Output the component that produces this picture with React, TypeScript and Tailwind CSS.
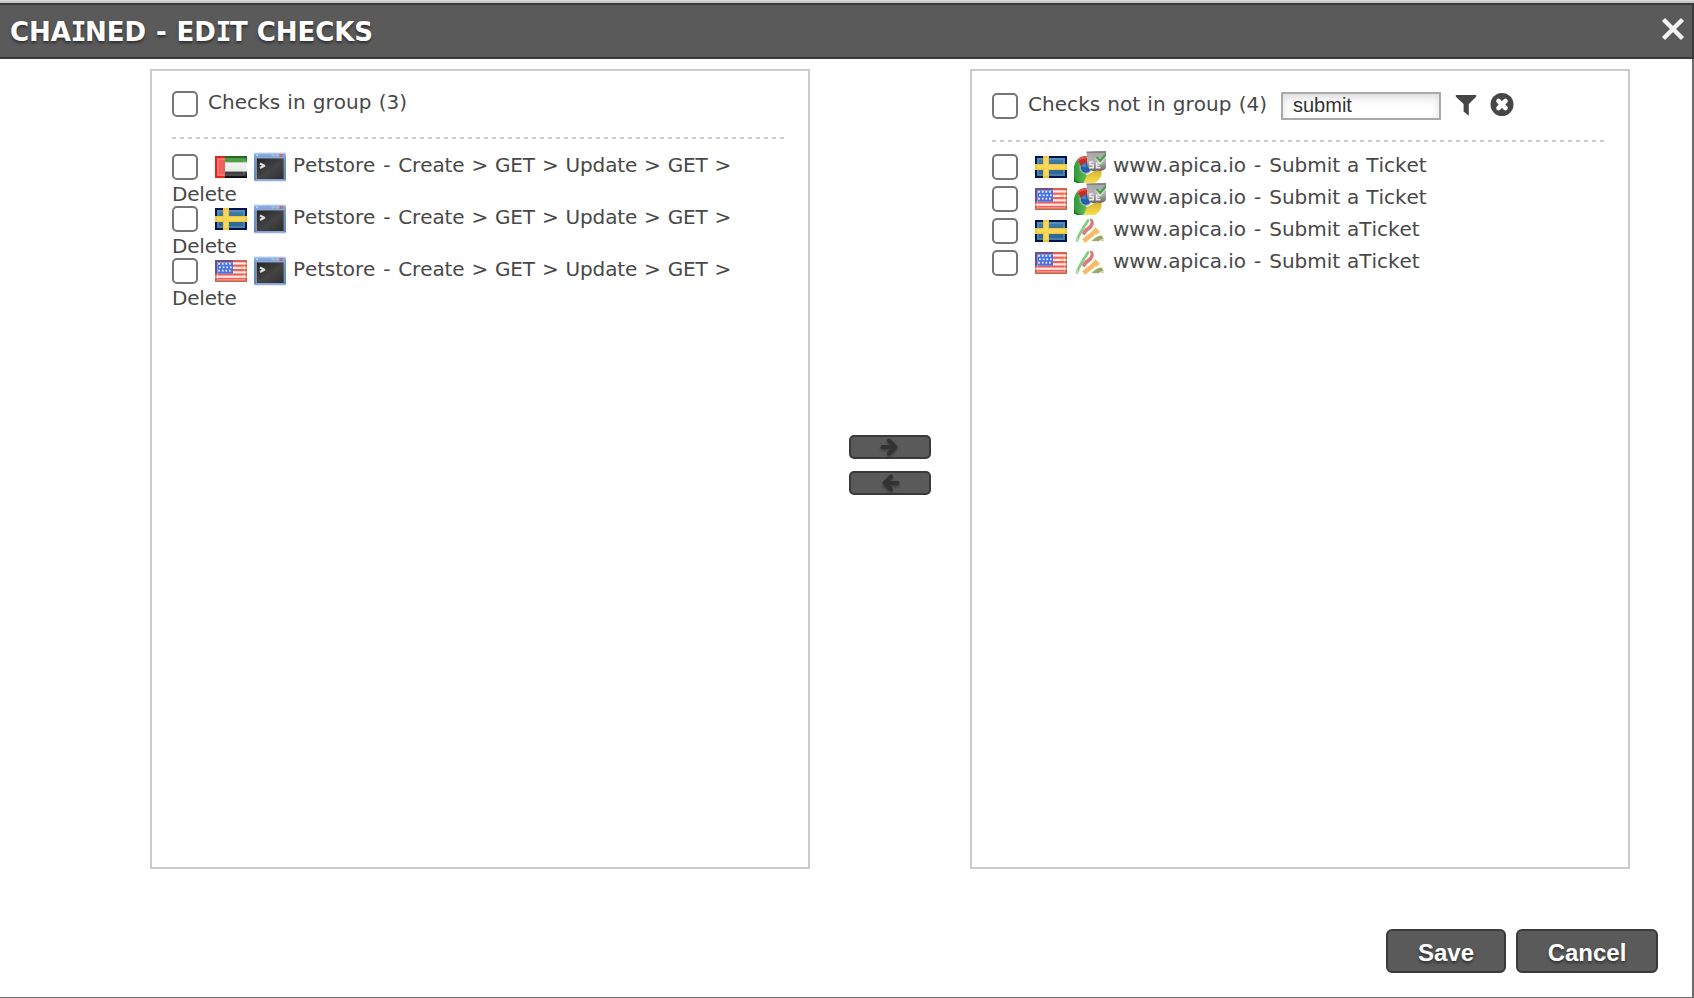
import React from "react";

const text =
  "font-['DejaVu_Sans',Verdana,sans-serif] text-[20px] text-[#484848] [font-kerning:none] [word-spacing:0.7px] whitespace-pre";

function Box() {
  return (
    <input
      type="checkbox"
      className="block h-[26px] w-[26px] shrink-0 appearance-none rounded-[5px] border-2 border-[#767676] bg-white"
    />
  );
}

function FlagFrame({ children }: { children: React.ReactNode }) {
  return (
    <svg width="32" height="22" viewBox="0 0 32 22" className="block shrink-0">
      {children}
    </svg>
  );
}

function FlagAE() {
  return (
    <FlagFrame>
      <defs>
        <linearGradient id="aeg" x1="0" y1="0" x2="0" y2="1">
          <stop offset="0" stopColor="#14600f" />
          <stop offset="1" stopColor="#62b257" />
        </linearGradient>
        <linearGradient id="aew" x1="0" y1="0" x2="0" y2="1">
          <stop offset="0" stopColor="#ffffff" />
          <stop offset="1" stopColor="#dedede" />
        </linearGradient>
        <linearGradient id="aek" x1="0" y1="0" x2="0" y2="1">
          <stop offset="0" stopColor="#4a4a4a" />
          <stop offset=".6" stopColor="#2a2a2a" />
          <stop offset="1" stopColor="#000000" />
        </linearGradient>
      </defs>
      <rect width="32" height="22" fill="url(#aew)" />
      <rect x="10" width="22" height="6.5" fill="url(#aeg)" />
      <rect x="10" y="15.5" width="22" height="6.5" fill="url(#aek)" />
      <rect width="10" height="22" fill="#e8211c" />
      <rect x="2" y="2" width="8" height="18" fill="#f2605a" />
      <rect x="3" y="3" width="26" height="16" fill="none" stroke="#fff" strokeWidth="2" strokeOpacity=".14" />
    </FlagFrame>
  );
}

function FlagSE() {
  return (
    <FlagFrame>
      <defs>
        <linearGradient id="seb" x1="0" y1="0" x2="0" y2="1">
          <stop offset="0" stopColor="#427fa9" />
          <stop offset="1" stopColor="#286291" />
        </linearGradient>
      </defs>
      <rect width="32" height="22" fill="#02134d" />
      <g className="[filter:blur(0.4px)]">
        <rect x="2" y="2" width="28" height="18" fill="url(#seb)" />
        <rect x="3" y="3" width="26" height="16" fill="none" stroke="#78a9c6" strokeWidth="2" strokeOpacity=".4" />
        <rect x="8" width="6" height="22" fill="#f4c437" />
        <rect y="8" width="32" height="6" fill="#f4c437" />
        <rect x="9" y="2" width="4" height="18" fill="#f9d65c" />
        <rect x="2" y="9" width="28" height="4" fill="#f9d65c" />
      </g>
    </FlagFrame>
  );
}

function FlagUS() {
  return (
    <FlagFrame>
      <rect width="32" height="22" fill="#fbece8" />
      <g className="[filter:blur(0.4px)]">
        {[0, 4.4, 8.8, 13.2, 17.6].map((y) => (
          <rect key={y} y={y + 0.2} width="32" height="2.2" fill="#f26158" />
        ))}
        <rect y="20.2" width="32" height="1.8" fill="#d97c60" />
        <rect width="18" height="13.6" fill="#4a6fe0" />
        <path d="M0 0H18V2H2V13.6H0Z" fill="#5551b0" />
        {[3.8, 7.2, 10.6].map((y, r) =>
          [4, 7.6, 11.2, 14.8].map((x) => (
            <rect key={`${x}-${y}`} x={x + (r % 2 ? 0.9 : 0) - 0.8} y={y - 0.8} width="1.8" height="1.8" fill="#e2ecff" />
          ))
        )}
        <rect x="2.5" y="2.5" width="27" height="17" fill="none" stroke="#fff" strokeOpacity=".3" />
        <rect x="26.3" y="6.6" width="2" height="2.2" fill="#ffc23e" />
      </g>
      <rect x=".75" y=".75" width="30.5" height="20.5" fill="none" stroke="#b4472c" strokeWidth="1.5" strokeOpacity=".45" />
    </FlagFrame>
  );
}

function TerminalIcon() {
  return (
    <svg width="32" height="32" viewBox="0 0 32 32" className="block shrink-0">
      <defs>
        <linearGradient id="tmf" x1="0" y1="0" x2="0" y2="1">
          <stop offset="0" stopColor="#8fb2e4" />
          <stop offset=".2" stopColor="#7197d2" />
          <stop offset="1" stopColor="#5f86c4" />
        </linearGradient>
        <linearGradient id="tms" x1="0" y1="0" x2="1" y2="1">
          <stop offset="0" stopColor="#242424" />
          <stop offset=".55" stopColor="#444444" />
          <stop offset="1" stopColor="#2d2d2d" />
        </linearGradient>
      </defs>
      <rect y="1.5" width="32" height="29" rx="1" fill="#c9d8ee" />
      <rect y="2.5" width="32" height="27" rx="1" fill="url(#tmf)" />
      <g className="[filter:blur(0.4px)]">
        <rect x="2" y="6.6" width="28" height="22" fill="#a2b6d3" />
        <rect x="2.7" y="7.4" width="27" height="20.6" fill="url(#tms)" />
        <rect x="2" y="3.2" width="2" height="2" fill="#b9d0f2" />
        <rect x="17.5" y="3.5" width="3" height="2" fill="#a4bfe6" />
        <rect x="21.8" y="3.5" width="3" height="2" fill="#a4bfe6" />
        <rect x="25.6" y="3" width="3.2" height="2.8" fill="#d0656c" />
        <path d="M6 12.600L10.200 14.800L6 17" fill="none" stroke="#dcdcdc" strokeWidth="2.300" strokeLinejoin="round" />
      </g>
    </svg>
  );
}

function ChromeSeleniumIcon() {
  return (
    <svg width="32" height="32" viewBox="0 0 32 32" className="block shrink-0">
      <defs>
        <linearGradient id="csg" x1="0" y1="0" x2="0" y2="1">
          <stop offset="0" stopColor="#a2a2a2" />
          <stop offset=".5" stopColor="#b4b4b4" />
          <stop offset="1" stopColor="#666666" />
        </linearGradient>
        <linearGradient id="csy" x1="0" y1="0" x2="0" y2="1">
          <stop offset="0" stopColor="#cfa92c" />
          <stop offset="1" stopColor="#f9e04e" />
        </linearGradient>
        <linearGradient id="csl" x1="0" y1="0" x2="1" y2="0">
          <stop offset="0" stopColor="#2b9a35" />
          <stop offset="1" stopColor="#6cbc5a" />
        </linearGradient>
      </defs>
      <g className="[filter:blur(0.5px)]">
        <path d="M4 8C0 12 -1 18 0 24L0 30L4 32H12L14 25L8 20Z" fill="url(#csl)" />
        <path d="M0 26C2 30 5 32 10 32H4L0 31Z" fill="#167d22" />
        <path d="M13 24L26 17C29 21 28 28 21 32H9.5Z" fill="url(#csy)" />
        <circle cx="11.800" cy="16.500" r="6.400" fill="#9eb0b8" />
        <path d="M3.5 9C5 6.5 8 5 13 5V13L7 15.500Z" fill="#c92a25" />
        <path d="M3.5 9C5 6.5 8 5 13 5V7.5C9 7.5 6 8.5 4.5 10.5Z" fill="#e15a4c" />
        <circle cx="11.800" cy="16.800" r="5" fill="#2462a8" />
        <path d="M7.400 15A5 5 0 0 1 11.800 12V16.500Z" fill="#4d86c0" />
        <path d="M12.5 1L32 0V17C30 20 26 20.5 23 19.5C19 21.500 14.500 18.500 13.500 15.500Z" fill="url(#csg)" />
        <path d="M12.5 .5L32 0V2H12.800Z" fill="#858585" />
        <path d="M22.500 6.500L26.500 11L32 4" fill="none" stroke="#cfdccf" strokeWidth="3.600" />
        <path d="M22.500 6L26.300 9.800L32 3" fill="none" stroke="#4a9c50" strokeWidth="2.200" />
        <path d="M19.500 11H15.900V13.600H19.200V16.600H15M26.500 12H22.600V16.600H26.500M22.600 14.300H25.600" fill="none" stroke="#e6e6e6" strokeWidth="1.600" />
      </g>
    </svg>
  );
}

function StripesIcon() {
  return (
    <svg width="32" height="32" viewBox="0 0 32 32" className="block shrink-0">
      <g className="[filter:blur(0.5px)]">
        <path d="M3 25.500C5 19 9 13 14 5.500" fill="none" stroke="#83cf84" strokeWidth="2.800" strokeLinecap="round" />
        <path d="M15.6 3.600L18.600 4.2C21.500 9 18.500 13.5 14.5 15.700C13 17 12 18 11 20L8 19.200C8.2 16 10.800 13.5 13.3 12C17 9.500 17.200 7 15.600 3.600Z" fill="#d9797e" />
        <path d="M9.500 26C14 22.500 18 19.500 23 15" fill="none" stroke="#f2bd69" strokeWidth="4.600" />
        <path d="M21.500 12L26 17L22 20L18.500 16Z" fill="#f2bd69" />
        <path d="M17.500 26C20 23 24 21.200 27.500 20.300L29.500 23.300L24.500 26.200Z" fill="#93ad65" />
        <path d="M26.500 26L29.800 23.500V26.200Z" fill="#efb7b0" />
        <path d="M1.500 25.500L4 23L4.500 26Z" fill="#c4e8c4" />
      </g>
    </svg>
  );
}

const Dash = () => <span className="px-[1px]">-</span>;

function Divider() {
  return (
    <div className="h-[2px] w-[613px] bg-[repeating-linear-gradient(90deg,#cccccc_0px,#cccccc_4px,transparent_4px,transparent_8px)]" />
  );
}

const left = [FlagAE, FlagSE, FlagUS];
const right = [
  { Flag: FlagSE, Icon: ChromeSeleniumIcon, label: "Submit a Ticket" },
  { Flag: FlagUS, Icon: ChromeSeleniumIcon, label: "Submit a Ticket" },
  { Flag: FlagSE, Icon: StripesIcon, label: "Submit aTicket" },
  { Flag: FlagUS, Icon: StripesIcon, label: "Submit aTicket" },
];

function SerifI() {
  return <span className="font-['DejaVu_Sans_Mono',monospace] tracking-[-1.4px]">I</span>;
}

function ArrowButton({ back }: { back?: boolean }) {
  return (
    <button className="flex h-6 w-[82px] items-center justify-center rounded-[5px] border-2 border-[#3a3a3a] bg-[#5a5a5a]">
      <svg
        width="20"
        height="20"
        viewBox="0 0 20 20"
        className={back ? "rotate-180 drop-shadow-[0_-2px_1px_rgba(0,0,0,0.3)]" : "drop-shadow-[0_2px_1px_rgba(0,0,0,0.3)]"}
      >
        <path d="M2.500 10H15M9 3.500L15.500 10L9 16.500" fill="none" stroke="#333" strokeWidth="4" strokeLinecap="round" strokeLinejoin="round" />
      </svg>
    </button>
  );
}

const action =
  "h-11 rounded-[6px] border-2 border-[#3a3a3a] bg-[#5a5a5a] pt-[4px] font-['Liberation_Sans',Arial,sans-serif] text-[24px] leading-[36px] font-bold text-white [text-shadow:0_2px_3px_rgba(0,0,0,0.5)]";

export default function App() {
  return (
    <div className="flex h-[998px] w-[1694px] flex-col overflow-hidden border-b border-[#6b6b6b] bg-white">
      <div className="h-[3px] shrink-0 border-t border-[#dadada] bg-[#c6c6c6]" />
      <header className="flex h-14 shrink-0 items-start justify-between border-y-2 border-r-2 border-[#3a3a3a] bg-[#5a5a5a] pl-[10px]">
        <h1 className="pt-[8px] font-['DejaVu_Sans',Verdana,sans-serif] text-[26px] leading-[38px] font-bold tracking-[-0.07px] whitespace-pre text-white [font-kerning:none] [text-shadow:0_2px_3px_rgba(0,0,0,0.5)]">
          CHA<SerifI />NED <span className="px-[1px]">-</span> ED<SerifI />T CHECKS
        </h1>
        <svg width="26" height="26" viewBox="0 0 26 26" className="mt-[11px] mr-[6px]">
          <path
            d="M3.500 3.500L22.500 22.500M22.500 3.500L3.500 22.500"
            stroke="#f3f3f3"
            strokeWidth="4.500"
            className="[filter:blur(0.5px)]"
          />
        </svg>
      </header>
      <main className="flex grow flex-col border-r-2 border-[#6b6b6b]">
        <div className="flex pt-[10px] pl-[150px]">
          <section className="h-[800px] w-[660px] border-2 border-[#cbcbcb] px-5 pt-5">
            <div className="flex h-[46px] items-start">
              <Box />
              <span className={`${text} ml-[10px] leading-[22px] tracking-[0.05px]`}>Checks in group (3)</span>
            </div>
            <Divider />
            <ul className="pt-[12px]">
              {left.map((Flag, i) => (
                <li key={i} className="h-[52px]">
                  <div className="flex h-8 items-center">
                    <Box />
                    <span className="ml-[17px]">
                      <Flag />
                    </span>
                    <span className="ml-[7px]">
                      <TerminalIcon />
                    </span>
                    <span className={`${text} ml-[7px] -mt-[5px] leading-[26px] tracking-[-0.12px]`}>
                      Petstore <Dash /> Create &gt; GET &gt; Update &gt; GET &gt;
                    </span>
                  </div>
                  <div className={`${text} leading-[22px] tracking-[-0.2px]`}>Delete</div>
                </li>
              ))}
            </ul>
          </section>
          <div className="flex w-40 flex-col items-center gap-3 pt-[366px]">
            <ArrowButton />
            <ArrowButton back />
          </div>
          <section className="h-[800px] w-[660px] border-2 border-[#cbcbcb] px-5 pt-[21px]">
            <div className="flex h-12 items-start">
              <span className="mt-px">
                <Box />
              </span>
              <span className={`${text} mt-px ml-[10px] w-[239px] leading-[22px] tracking-[0.05px]`}>
                Checks not in group (4)
              </span>
              <input
                defaultValue="submit"
                className="ml-[14px] h-7 w-[160px] rounded-none border-2 border-[#a9a9a9] bg-white px-[10px] pb-[2px] font-['Liberation_Sans',Arial,sans-serif] text-[20px] leading-[22px] text-[#333] shadow-[inset_0_4px_8px_rgba(0,0,0,0.14)] outline-none"
              />
              <svg width="22" height="22" viewBox="0 0 22 22" className="mt-[2px] ml-[14px]">
                <path d="M.8 1H21.200V2.800L13.800 10V21.800L8.600 17.600V10L.8 2.800Z" fill="#464646" />
              </svg>
              <svg width="24" height="24" viewBox="0 0 24 24" className="mt-px ml-[13px]">
                <circle cx="12" cy="11.500" r="11.500" fill="#464646" />
                <path d="M8.500 8L15.500 15M15.500 8L8.500 15" stroke="#fff" strokeWidth="4.600" strokeLinecap="round" />
              </svg>
            </div>
            <Divider />
            <ul className="pt-[9px]">
              {right.map(({ Flag, Icon, label }, i) => (
                <li key={i} className="flex h-8 items-center">
                  <Box />
                  <span className="ml-[17px]">
                    <Flag />
                  </span>
                  <span className="ml-[7px]">
                    <Icon />
                  </span>
                  <span className={`${text} ml-[7px] -mt-[5px] leading-[26px] tracking-[-0.03px]`}>
                    www.apica.io <Dash /> {label}
                  </span>
                </li>
              ))}
            </ul>
          </section>
        </div>
        <footer className="mt-[60px] flex justify-end gap-[10px] pr-[34px]">
          <button className={`${action} w-[120px]`}>Save</button>
          <button className={`${action} w-[142px]`}>Cancel</button>
        </footer>
      </main>
    </div>
  );
}
